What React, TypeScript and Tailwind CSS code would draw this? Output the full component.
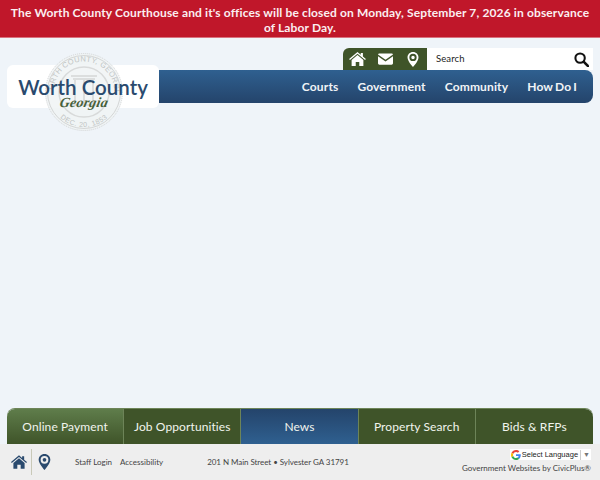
import React from 'react';

const font = "font-['Lato','Open_Sans',sans-serif]";

const navItems = ['Courts', 'Government', 'Community', 'How Do I'];

const tabs = [
  { name: 'Online Payment', className: 'bg-gradient-to-b from-[#5f7d4b] to-[#3f5429] rounded-tl-lg border-r border-[#6d8458]' },
  { name: 'Job Opportunities', className: 'bg-[#3f5429] border-r border-[#6d8458]' },
  { name: 'News', className: 'bg-gradient-to-b from-[#24446b] to-[#2f6090] border-r border-[#6d8458]' },
  { name: 'Property Search', className: 'bg-[#3f5429] border-r border-[#6d8458]' },
  { name: 'Bids & RFPs', className: 'bg-[#3f5429] rounded-tr-lg' },
];

const HomeIcon = ({ className, fill }: { className: string; fill: string }) => (
  <svg viewBox="0 0 18 15" className={className}>
    <path fill={fill} d="M9 0L0 7.600l.9 1.100L9 2l8.100 6.700.9-1.100-3.200-2.700V1h-2.300v2L9 0z" />
    <path fill={fill} d="M9 3.300L2.700 8.500V15h4.400v-4.400h3.800V15h4.400V8.500L9 3.300z" />
  </svg>
);

const MailIcon = ({ className, fill }: { className: string; fill: string }) => (
  <svg viewBox="0 0 16 12" className={className}>
    <path fill={fill} d="M1.500 0h13c.7 0 1.300.5 1.500 1.200L8 6.800 0 1.200C.2.500.8 0 1.500 0z" />
    <path fill={fill} d="M0 3v7.500C0 11.300.7 12 1.500 12h13c.8 0 1.500-.7 1.500-1.500V3L8 8.600 0 3z" />
  </svg>
);

const MapPin = ({ className, fill }: { className: string; fill: string }) => (
  <svg viewBox="0 0 20 26" className={className}>
    <path
      fillRule="evenodd"
      fill={fill}
      d="M10 0C4.500 0 .5 4.200.5 9.500.5 16 10 26 10 26s9.500-10 9.500-16.500C19.500 4.200 15.500 0 10 0zm0 3.200a6.300 6.300 0 1 1 0 12.600 6.300 6.300 0 0 1 0-12.600zm0 3.300a3 3 0 1 0 0 6 3 3 0 0 0 0-6z"
    />
  </svg>
);

const GoogleG = () => (
  <svg viewBox="0 0 48 48" className="w-[10px] h-[10px] mr-[1px]">
    <path fill="#EA4335" d="M24 9.500c3.500 0 6.700 1.200 9.200 3.600l6.900-6.900C35.900 2.400 30.400 0 24 0 14.600 0 6.500 5.400 2.600 13.200l8 6.200C12.400 13.700 17.700 9.500 24 9.500z" />
    <path fill="#4285F4" d="M47 24.500c0-1.600-.1-3.100-.4-4.500H24v9h12.900c-.6 3-2.200 5.500-4.700 7.200l7.700 6C44.400 38 47 31.800 47 24.500z" />
    <path fill="#FBBC05" d="M10.600 28.600A14.500 14.500 0 0 1 9.800 24c0-1.600.3-3.200.8-4.600l-8-6.200A24 24 0 0 0 0 24c0 3.900.9 7.500 2.600 10.800l8-6.200z" />
    <path fill="#34A853" d="M24 48c6.500 0 11.900-2.100 15.900-5.800l-7.700-6c-2.200 1.400-4.900 2.300-8.200 2.300-6.300 0-11.600-4.200-13.400-9.900l-8 6.200C6.500 42.600 14.600 48 24 48z" />
  </svg>
);

const Seal = () => (
  <svg viewBox="0 0 80 80" className="absolute left-[37px] top-[-13px] w-[80px] h-[80px]">
    <defs>
      <path id="sealTop" d="M9.500 40a30.500 30.500 0 0 1 61 0" />
      <path id="sealBottom" d="M5 40a35 35 0 0 0 70 0" />
    </defs>
    <circle cx="40" cy="40" r="38.500" fill="#f0f3f5" fillOpacity="0.85" stroke="#d2d4d4" strokeWidth="1" strokeDasharray="1 1" />
    <circle cx="40" cy="40" r="36.500" fill="none" stroke="#d4d6d6" strokeWidth="1" />
    <circle cx="40" cy="40" r="25" fill="none" stroke="#d8dada" strokeWidth="1.500" />
    <text fontSize="7.500" fill="#c0c4c4" fontFamily="Liberation Sans, sans-serif" letterSpacing="0.3">
      <textPath href="#sealTop" startOffset="50%" textAnchor="middle">WORTH COUNTY, GEORGIA</textPath>
    </text>
    <text fontSize="7" fill="#c0c4c4" fontFamily="Liberation Sans, sans-serif" letterSpacing="0.5">
      <textPath href="#sealBottom" startOffset="50%" textAnchor="middle">DEC. 20, 1853</textPath>
    </text>
    <path d="M27 24h26M29 27h22M31 28v24M40 28v24M49 28v24M27 53h26" fill="none" stroke="#dcdede" strokeWidth="2" />
  </svg>
);

export default function App() {
  return (
    <div className={`${font} flex flex-col h-screen overflow-hidden bg-[#eff4f9]`}>
      {/* Alert */}
      <div className="h-[38px] shrink-0 bg-[#c0172a] border-b border-[#d9737f] px-2 pt-[5px] text-center text-[12px] leading-[15px] font-bold tracking-[0.13px] text-[#fbeef0]">
        The Worth County Courthouse and it's offices will be closed on Monday, September 7, 2026 in observance of Labor Day.
      </div>

      {/* Header */}
      <header className="relative px-[7px] pt-[10px]">
        <div className="flex justify-end">
          <div className="flex h-[22px] w-[250px]">
            <div className="flex items-center w-[84px] pl-[6px] bg-[#3f5429] rounded-tl-md">
              <HomeIcon className="w-[17px] h-[14px]" fill="#ffffff" />
              <MailIcon className="w-[15px] h-[12px] ml-[12px]" fill="#ffffff" />
              <MapPin className="w-[12px] h-[15px] ml-[14px]" fill="#ffffff" />
            </div>
            <div className="flex flex-1 items-center justify-between bg-white pl-[9px] pr-[4px]">
              <span className="mt-[1px] text-[9.5px] tracking-[0.1px] text-[#222]">Search</span>
              <svg viewBox="0 0 16 16" className="w-[15px] h-[15px]">
                <circle cx="6.500" cy="6.500" r="5" fill="none" stroke="#111" strokeWidth="2.200" />
                <path d="M10.500 10.500L15 15" stroke="#111" strokeWidth="2.800" strokeLinecap="round" />
              </svg>
            </div>
          </div>
        </div>
        <div className="flex items-center -mt-[5px]">
          <div className="relative z-10 flex flex-col items-center w-[152px] h-[43px] bg-white rounded-md">
            <Seal />
            <span className="relative mt-[10px] text-[20.5px] leading-[24px] font-semibold text-[#2a4a6e]">Worth County</span>
            <span className="relative -mt-[4px] ml-[2px] -skew-x-12 font-['Liberation_Serif',serif] italic font-bold text-[14px] leading-[15px] tracking-[0.2px] text-[#46603a]">Georgia</span>
          </div>
          <nav className="flex flex-1 items-center justify-end gap-[19px] h-[33px] pr-[16px] rounded-r-lg bg-gradient-to-b from-[#2f6090] to-[#24446b]">
            {navItems.map((item) => (
              <span key={item} className="text-[12px] font-bold tracking-[0.15px] [word-spacing:-1px] text-[#f1f4f7]">{item}</span>
            ))}
          </nav>
        </div>
      </header>

      <main className="flex-1" />

      {/* Quick links */}
      <div className="grid grid-cols-5 mx-[7px] h-[36px] shrink-0 border-t border-[#6d8458] rounded-t-lg">
        {tabs.map((tab) => (
          <div key={tab.name} className={`flex items-center justify-center text-[12px] font-normal tracking-[0.1px] text-[#f1f4ee] ${tab.className}`}>
            {tab.name}
          </div>
        ))}
      </div>

      {/* Footer */}
      <footer className="flex items-center h-[36px] shrink-0 bg-[#eeeeee] pl-[11px] pr-[9px] text-[8px] text-[#444]">
        <HomeIcon className="w-[16px] h-[14px]" fill="#2a4a6e" />
        <div className="w-px h-[26px] bg-[#c9c9b8] ml-[4px] mr-[6px]" />
        <MapPin className="w-[13px] h-[16px]" fill="#2a4a6e" />
        <div className="flex gap-[8px] ml-[24px]">
          <span>Staff Login</span>
          <span>Accessibility</span>
        </div>
        <span className="ml-[44px] -tracking-[0.05px]">201 N Main Street • Sylvester GA 31791</span>
        <div className="flex flex-col items-end gap-[2px] ml-auto -mt-[1px]">
          <div className="flex items-center h-[11px] bg-white px-[1px] font-['Liberation_Sans',sans-serif] text-[7.5px] text-[#222]">
            <GoogleG />
            <span>Select Language</span>
            <span className="ml-[2px] pl-[2px] border-l border-[#ccc] text-[#777] text-[7px] leading-[10px]">▼</span>
          </div>
          <span>Government Websites by CivicPlus®</span>
        </div>
      </footer>
    </div>
  );
}
